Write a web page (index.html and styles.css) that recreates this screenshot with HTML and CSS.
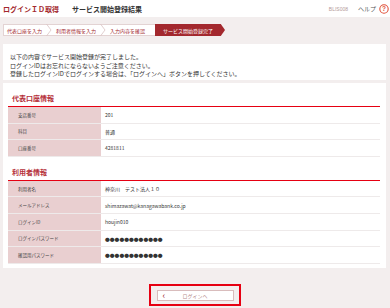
FILE: index.html
```html
<!DOCTYPE html>
<html lang="ja">

<head>
    <meta charset="UTF-8">
    <title>ログインＩＤ取得</title>
    <link rel="stylesheet" href="styles.css">
</head>

<body>
    <div class="header">
        <span class="title">ログインＩＤ取得</span>
        <span class="subtitle">サービス開始登録結果</span>
        <div class="help">
            <span class="screen-id">BLIS008</span>
            <span class="help-text">ヘルプ</span>
            <svg class="help-icon" width="10" height="10" viewBox="0 0 10 10">
                <circle cx="5" cy="5" r="4.2" fill="#fff" stroke="#e0503a" stroke-width="1.1" />
                <text x="5" y="7.4" text-anchor="middle" font-size="6.5" font-weight="bold" fill="#e0503a"
                    font-family="Liberation Sans, sans-serif">?</text>
            </svg>
        </div>
    </div>

    <!-- ステップ表示 -->
    <div class="steps">
        <div class="steps-done">
            <span class="step">代表口座を入力</span>
            <svg class="sep" width="6" height="12" viewBox="0 0 6 12">
                <polyline points="0.5,0 5,6 0.5,12" fill="none" stroke="#d9c3c3" stroke-width="0.8" />
            </svg>
            <span class="step">利用者情報を入力</span>
            <svg class="sep" width="6" height="12" viewBox="0 0 6 12">
                <polyline points="0.5,0 5,6 0.5,12" fill="none" stroke="#d9c3c3" stroke-width="0.8" />
            </svg>
            <span class="step">入力内容を確認</span>
        </div>
        <div class="step-current">サービス開始登録完了</div>
    </div>

    <div class="message">
        以下の内容でサービス開始登録が完了しました。<br>
        ログインIDはお忘れにならないようご注意ください。<br>
        登録したログインIDでログインする場合は、「ログインへ」ボタンを押してください。
    </div>

    <div class="panel">
        <!-- 代表口座情報 -->
        <h2>代表口座情報</h2>
        <div class="rows">
            <div class="row"><div class="label">支店番号</div><div class="value">201</div></div>
            <div class="row"><div class="label">科目</div><div class="value">普通</div></div>
            <div class="row"><div class="label">口座番号</div><div class="value">4281811</div></div>
        </div>

        <!-- 利用者情報 -->
        <h2>利用者情報</h2>
        <div class="rows">
            <div class="row"><div class="label">利用者名</div><div class="value">神奈川　テスト法人１０</div></div>
            <div class="row"><div class="label">メールアドレス</div><div class="value">shimazawat@kanagawabank.co.jp</div></div>
            <div class="row"><div class="label">ログインID</div><div class="value">houjin010</div></div>
            <div class="row"><div class="label">ログインパスワード</div><div class="value dots">●●●●●●●●●●●●</div></div>
            <div class="row"><div class="label">確認用パスワード</div><div class="value dots">●●●●●●●●●●●●</div></div>
        </div>
    </div>

    <div class="actions">
        <div class="highlight">
            <button class="back-btn"><span class="chev">&lsaquo;</span><span>ログインへ</span></button>
        </div>
    </div>
</body>

</html>
```

FILE: styles.css
```css
body {
    margin: 0;
    width: 390px;
    height: 308px;
    overflow: hidden;
    background-color: #f3eeee;
    font-family: "Noto Sans CJK JP", "Noto Sans", sans-serif;
    color: #333;
}

.header {
    display: flex;
    align-items: center;
    height: 17px;
    padding: 0 1px 0 3px;
    background-color: #fff;
}

.title {
    font-size: 7px;
    font-weight: bold;
    color: #a3282e;
}

.subtitle {
    margin-left: 13px;
    font-size: 7px;
    font-weight: bold;
    color: #333;
}

.help {
    display: flex;
    align-items: center;
    margin-left: auto;
}

.screen-id {
    font-size: 5px;
    color: #b49a9a;
    font-family: "Liberation Sans", sans-serif;
}

.help-text {
    margin-left: 10px;
    font-size: 6px;
    color: #555;
}

.help-icon {
    margin-left: 3px;
}

.steps {
    display: flex;
    margin: 7px 3px 0;
    height: 12px;
}

.steps-done {
    display: flex;
    align-items: center;
    width: 152px;
    padding-left: 3px;
    box-sizing: border-box;
    border: 1px solid #e3d3d3;
    border-right: none;
    background-color: #fff;
    white-space: nowrap;
}

.step {
    flex-shrink: 0;
    font-size: 5px;
    color: #a3282e;
}

.sep {
    flex-shrink: 0;
    margin: 0 4px;
}

.step-current {
    display: flex;
    align-items: center;
    width: 70px;
    padding-left: 8px;
    box-sizing: border-box;
    font-size: 5px;
    color: #fff;
    white-space: nowrap;
    background-color: #a3282e;
    clip-path: polygon(0 0, 94% 0, 100% 50%, 94% 100%, 0 100%);
}

.message {
    margin: 8px 4px 0 3px;
    height: 36px;
    box-sizing: border-box;
    padding: 9px 7px;
    background-color: #fff;
    font-size: 6px;
    line-height: 8.5px;
}

.panel {
    margin: 3px 4px 0 3px;
    height: 185px;
    box-sizing: border-box;
    padding: 10px 6px 0 5px;
    background-color: #fff;
}

.panel h2 {
    margin: 0;
    padding: 0 0 3px 4px;
    font-size: 7px;
    line-height: 10px;
    color: #b5303a;
    border-bottom: 1.5px solid #e60012;
}

.rows {
    margin-bottom: 10px;
}

.row {
    display: grid;
    grid-template-columns: 93px 1fr;
    height: 16.6px;
    border-bottom: 1px solid #eeeaea;
    box-sizing: border-box;
}

.label {
    display: flex;
    align-items: center;
    padding-left: 10px;
    font-size: 4.5px;
    color: #444;
    background-color: #e9cfd0;
}

.value {
    display: flex;
    align-items: center;
    padding-left: 4px;
    font-size: 5px;
    color: #333;
}

.dots {
    font-size: 4.8px;
    color: #333;
}

.actions {
    display: flex;
    justify-content: center;
    padding-top: 16px;
}

.highlight {
    width: 92px;
    height: 22px;
    box-sizing: border-box;
    border: 2px solid #e60012;
    display: flex;
    align-items: center;
    justify-content: center;
}

.back-btn {
    position: relative;
    width: 77px;
    height: 11px;
    padding: 0;
    background-color: #fff;
    border: 1px solid #d9bcbc;
    font-family: "Noto Sans CJK JP", sans-serif;
    font-size: 5px;
    color: #b58a8a;
    cursor: pointer;
}

.chev {
    position: absolute;
    left: 5px;
    top: -1px;
    font-size: 9px;
    line-height: 11px;
    color: #a3282e;
}
```
